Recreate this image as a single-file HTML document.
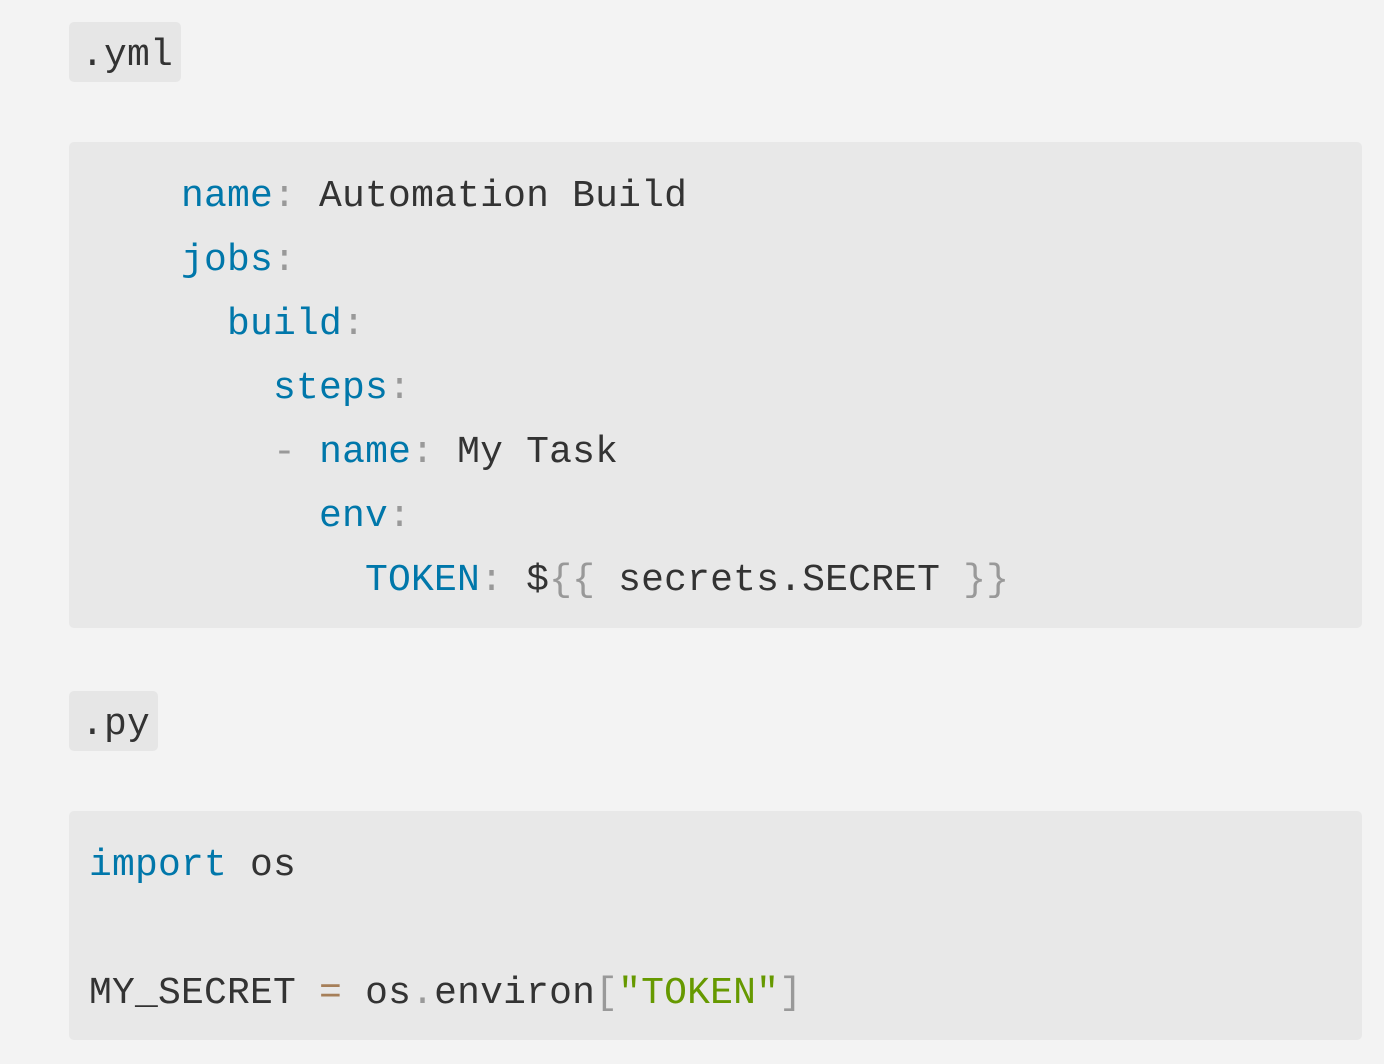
<!DOCTYPE html>
<html><head><meta charset="utf-8"><style>
html,body{margin:0;padding:0;background:#f3f3f3;width:1384px;height:1064px;overflow:hidden}
body{font-family:"Liberation Mono","DejaVu Sans Mono",monospace;font-size:38px;color:#333;letter-spacing:0.2px}
.badge{position:absolute;left:69px;background:#e6e6e6;border-radius:5px;height:60px;line-height:60px;padding:4px 12px 0;box-sizing:border-box}
.block{position:absolute;left:69px;width:1293px;background:#e8e8e8;border-radius:5px;box-sizing:border-box;padding-left:20px;white-space:pre;line-height:64px}
.k{color:#07a}.p{color:#999}.s{color:#690}.o{color:#a67f59}
</style></head><body>
<div class="badge" style="top:22px;width:112px">.yml</div>
<div class="block" style="top:142px;height:486px;padding-top:23px"><span>    <span class="k">name</span><span class="p">:</span> Automation Build
    <span class="k">jobs</span><span class="p">:</span>
      <span class="k">build</span><span class="p">:</span>
        <span class="k">steps</span><span class="p">:</span>
        <span class="p">-</span> <span class="k">name</span><span class="p">:</span> My Task
          <span class="k">env</span><span class="p">:</span>
            <span class="k">TOKEN</span><span class="p">:</span> $<span class="p">{{</span> secrets.SECRET <span class="p">}}</span></span></div>
<div class="badge" style="top:691px;width:89px">.py</div>
<div class="block" style="top:811px;height:229px;padding-top:23px"><span class="k">import</span> os

MY_SECRET <span class="o">=</span> os<span class="p">.</span>environ<span class="p">[</span><span class="s">"TOKEN"</span><span class="p">]</span></div>
</body></html>
